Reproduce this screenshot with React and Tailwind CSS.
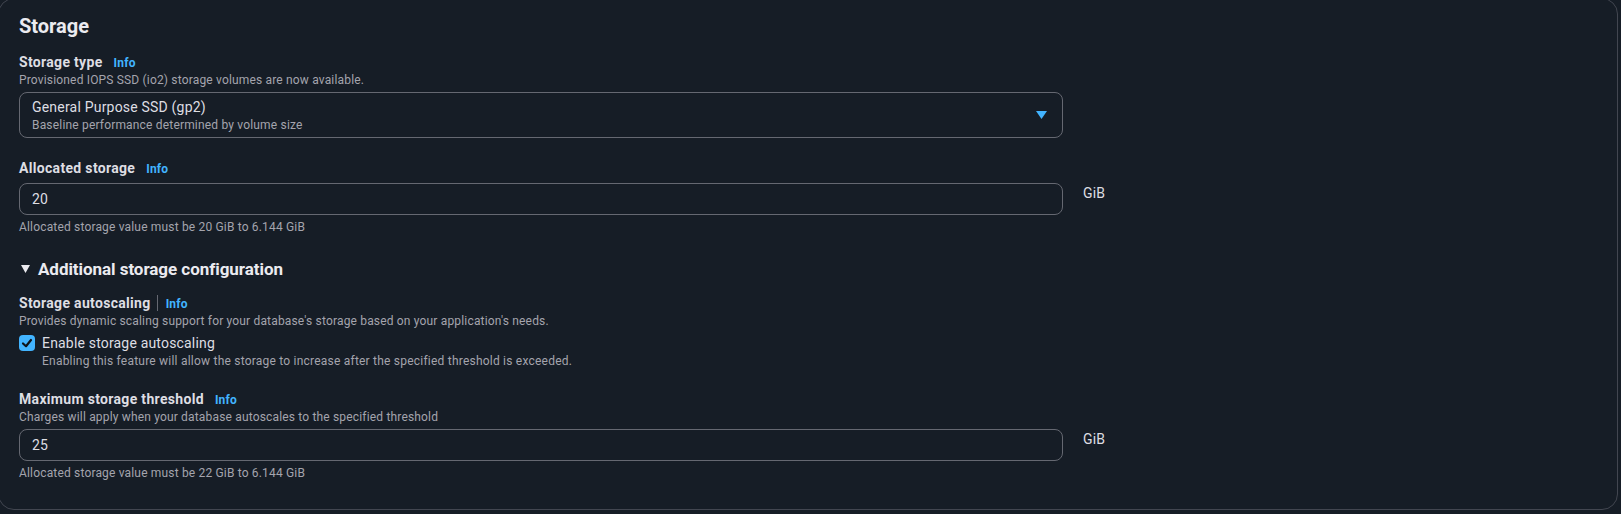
import React from "react";

function Info({ className = "ml-[11px]" }) {
  return (
    <span className={"text-[12px] leading-[16px] font-bold tracking-[0.2px] text-[#42b4ff] " + className}>Info</span>
  );
}

function Label({ children }) {
  return (
    <div className="flex items-baseline">
      <span className="text-[14px] leading-[20px] font-bold tracking-[0.32px] text-[#dedee3]">{children}</span>
      <Info />
    </div>
  );
}

function Desc({ children, className = "" }) {
  return <div className={"text-[12px] leading-[16px] tracking-[0.17px] text-[#a4a4ad] " + className}>{children}</div>;
}

function NumberInput({ value }) {
  return (
    <div className="flex items-start">
      <div className="w-[1044px] h-[32px] border border-[#656871] rounded-[8px] flex items-center pl-3">
        <span className="text-[14px] leading-[20px] tracking-[0.18px] text-[#dedee3]">{value}</span>
      </div>
      <span className="ml-5 text-[14px] leading-[20px] tracking-[0.18px] text-[#dedee3]">GiB</span>
    </div>
  );
}

export default function App() {
  return (
    <div className="w-full h-[514px] overflow-hidden bg-[#161d26] font-['Roboto',sans-serif]">
      <div className="-ml-[2px] -mt-[2px] w-[1620px] h-[512px] border border-[#424650] rounded-[16px] bg-[#161d26] px-5 pt-[15px]">
        <h2 className="text-[20px] leading-[24px] font-bold text-[#ebebf0]">Storage</h2>

        <div className="mt-[14px]">
          <Label>Storage type</Label>
          <Desc>Provisioned IOPS SSD (io2) storage volumes are now available.</Desc>
          <div className="mt-1 w-[1044px] h-[46px] border border-[#656871] rounded-[8px] flex items-center justify-between pl-3 pr-[15px]">
            <div>
              <div className="text-[14px] leading-[20px] tracking-[0.2px] text-[#dedee3]">General Purpose SSD (gp2)</div>
              <div className="text-[12px] leading-[16px] tracking-[0.18px] text-[#a4a4ad]">Baseline performance determined by volume size</div>
            </div>
            <svg width="11" height="8" viewBox="0 0 11 8">
              <polygon points="0,0 11,0 5.5,8" fill="#42b4ff" />
            </svg>
          </div>
        </div>

        <div className="mt-5">
          <Label>Allocated storage</Label>
          <div className="mt-[5px]">
            <NumberInput value="20" />
          </div>
          <Desc className="mt-1">Allocated storage value must be 20 GiB to 6.144 GiB</Desc>
        </div>

        <div className="mt-6 flex items-center">
          <svg width="9" height="8" viewBox="0 0 9 8" className="ml-[2px]">
            <polygon points="0,0 9,0 4.5,8" fill="#ebebf0" />
          </svg>
          <span className="ml-2 text-[17px] leading-[20px] font-bold tracking-[-0.05px] text-[#ebebf0]">Additional storage configuration</span>
        </div>

        <div className="mt-[14px]">
          <div className="flex items-baseline">
            <span className="text-[14px] leading-[20px] font-bold tracking-[0.32px] text-[#dedee3]">Storage autoscaling</span>
            <span className="ml-[6px] w-px h-[16px] bg-[#656871] self-center"></span>
            <Info className="ml-2" />
          </div>
          <Desc>Provides dynamic scaling support for your database's storage based on your application's needs.</Desc>
          <div className="mt-1 flex items-start">
            <div className="mt-[2px] w-4 h-4 rounded-[4px] bg-[#42b4ff] flex items-center justify-center">
              <svg width="16" height="16" viewBox="0 0 16 16">
                <path d="M4 8.5 L7 11.2 L12 5" fill="none" stroke="#0f141a" strokeWidth="2.2" strokeLinecap="round" strokeLinejoin="round" />
              </svg>
            </div>
            <div className="ml-[7px]">
              <div className="text-[14px] leading-[20px] tracking-[0.18px] text-[#dedee3]">Enable storage autoscaling</div>
              <Desc className="tracking-[0.22px]">Enabling this feature will allow the storage to increase after the specified threshold is exceeded.</Desc>
            </div>
          </div>
        </div>

        <div className="mt-5">
          <Label>Maximum storage threshold</Label>
          <Desc>Charges will apply when your database autoscales to the specified threshold</Desc>
          <div className="mt-1">
            <NumberInput value="25" />
          </div>
          <Desc className="mt-1">Allocated storage value must be 22 GiB to 6.144 GiB</Desc>
        </div>
      </div>
    </div>
  );
}
